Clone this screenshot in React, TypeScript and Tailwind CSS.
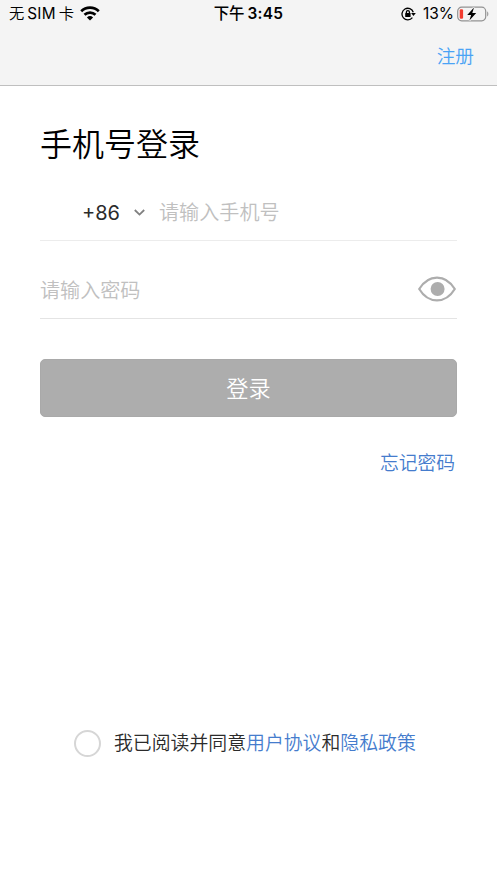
import { useState } from 'react'

const StatusBar = () => {
	return (
		<div className="grid h-7 grid-cols-[1fr_auto_1fr] items-center pl-[9px] pr-[7px] text-black">
			<div className="flex items-center">
				<span className="flex items-center gap-[3px] text-[15.3px] leading-7">
					<span className="font-[350]">无</span>
					<span className="tracking-[0.2px]">SIM</span>
					<span className="font-[350]">卡</span>
				</span>
				<svg
					className="mb-px ml-[6px]"
					width="20"
					height="15"
					viewBox="0 0 20 15"
					fill="none"
					stroke="currentColor"
					strokeWidth="2.7"
				>
					<path d="M1.2 5.3a12.6 12.6 0 0 1 17.6 0" />
					<path d="M4.5 8.8a7.9 7.9 0 0 1 11 0" />
					<path
						d="M6.9 11.4a4.5 4.5 0 0 1 6.2 0L10 14.6z"
						fill="currentColor"
						stroke="none"
					/>
				</svg>
			</div>

			<div className="mr-[2px] flex items-center gap-[3px] text-[15.4px] font-semibold leading-7">
				<span className="font-medium">下午</span>
				<span className="tracking-[0.3px]">3:45</span>
			</div>

			<div className="flex items-center justify-end">
				<svg
					className="mr-px"
					width="15"
					height="14"
					viewBox="0 0 15 14"
					fill="none"
					stroke="currentColor"
					strokeWidth="1.3"
				>
					<path d="M12.3 5.2A5.8 5.8 0 1 0 11.4 10.6" />
					<path
						d="M10.1 6h4.7l-2.3 3z"
						fill="currentColor"
						stroke="none"
					/>
					<rect
						x="4.2"
						y="6"
						width="5.4"
						height="4"
						rx="0.6"
						fill="currentColor"
						stroke="none"
					/>
					<path d="M5.4 6.4V5.1a1.5 1.5 0 0 1 3 0v1.3" />
				</svg>
				<span className="ml-[6px] text-[15.5px] leading-7">13%</span>
				<svg
					className="mb-px ml-[3px]"
					width="33"
					height="16"
					viewBox="0 0 33 16"
				>
					<rect
						x="0.7"
						y="1.2"
						width="28"
						height="13.6"
						rx="4"
						fill="none"
						stroke="#929292"
						strokeWidth="1.2"
					/>
					<rect
						x="2.7"
						y="3.2"
						width="3.4"
						height="9.6"
						rx="1.2"
						fill="#f23c30"
					/>
					<path d="M30.2 5.6c1.5.5 1.5 4.3 0 4.8z" fill="#929292" />
					<path
						d="M17 1.6 10.2 9h3.9l-1.7 5.4L19.2 7h-3.9z"
						fill="#000"
						stroke="#f4f4f4"
						strokeWidth="2"
						paintOrder="stroke"
					/>
				</svg>
			</div>
		</div>
	)
}

const EyeIcon = () => {
	return (
		<svg
			width="38"
			height="26"
			viewBox="0 0 38 26"
			fill="none"
			stroke="#adadad"
			strokeWidth="2.2"
		>
			<path
				d="M1.2 13C5.6 5.8 11.5 1.6 19 1.6S32.4 5.8 36.8 13C32.4 20.2 26.5 24.4 19 24.4S5.6 20.2 1.2 13z"
				strokeLinejoin="round"
			/>
			<circle cx="19.6" cy="13" r="7" fill="#adadad" stroke="none" />
		</svg>
	)
}

const App = () => {
	const [phone, setPhone] = useState('')
	const [password, setPassword] = useState('')
	const [showPassword, setShowPassword] = useState(false)
	const [agreed, setAgreed] = useState(false)

	return (
		<main className="flex h-[883px] w-full flex-col bg-white font-['Inter','Noto_Sans_CJK_SC',sans-serif]">
			<header className="h-[86px] border-b border-[#bfbfbf] bg-[#f4f4f4]">
				<StatusBar />
				<nav className="flex h-[57px] items-center justify-end pr-[23px]">
					<button className="text-[18.7px] font-[350] leading-7 text-[#4aa3f5]">
						注册
					</button>
				</nav>
			</header>

			<form className="flex flex-col px-10" onSubmit={e => e.preventDefault()}>
				<h1 className="mt-[35px] text-[32px] font-[350] leading-[48px] text-black">
					手机号登录
				</h1>

				<div className="mt-4 flex h-14 items-center border-b border-[#ececec]">
					<button
						type="button"
						className="flex items-center pl-[42px] text-[20px] leading-7 text-[#2b2b2b]"
					>
						<span>+86</span>
						<svg
							className="ml-[14px]"
							width="11"
							height="7"
							viewBox="0 0 11 7"
							fill="none"
							stroke="#808080"
							strokeWidth="1.8"
						>
							<path d="m.8 1 4.7 4.6L10.2 1" />
						</svg>
					</button>
					<input
						className="ml-[14px] mt-[2px] h-7 min-w-0 flex-1 text-[20.1px] font-[350] outline-none placeholder:text-[#c0c0c0]"
						type="tel"
						placeholder="请输入手机号"
						value={phone}
						onChange={e => setPhone(e.target.value)}
					/>
				</div>

				<div className="mt-[18px] flex h-[60px] items-center border-b border-[#e4e4e4] pt-px">
					<input
						className="mt-[5px] h-7 min-w-0 flex-1 text-[20.1px] font-[350] outline-none placeholder:text-[#c0c0c0]"
						type={showPassword ? 'text' : 'password'}
						placeholder="请输入密码"
						value={password}
						onChange={e => setPassword(e.target.value)}
					/>
					<button
						type="button"
						className="mr-px"
						aria-label="显示密码"
						onClick={() => setShowPassword(prev => !prev)}
					>
						<EyeIcon />
					</button>
				</div>

				<button className="mt-10 h-[58px] rounded-[5px] border border-[#a9a9a9] bg-[#adadad] pt-[2px] text-[22.2px] font-[350] text-white">
					登录
				</button>

				<button
					type="button"
					className="mr-[2px] mt-[33px] self-end text-[18.8px] font-[350] leading-7 text-[#457ccd]"
				>
					忘记密码
				</button>
			</form>

			<footer className="mb-[125px] mt-auto flex items-center pl-[74px]">
				<button
					type="button"
					role="checkbox"
					aria-checked={agreed}
					aria-label="同意协议"
					onClick={() => setAgreed(prev => !prev)}
					className={`size-[27px] rounded-full border-2 border-[#d6d6d6] ${agreed ? 'bg-[#457ccd]' : 'bg-white'}`}
				/>
				<p className="ml-[13px] whitespace-nowrap pt-px text-[18.87px] font-[350] leading-7 text-[#2b2b2b]">
					我已阅读并同意<a className="text-[#457ccd]">用户协议</a>和
					<a className="text-[#457ccd]">隐私政策</a>
				</p>
			</footer>
		</main>
	)
}

export default App
